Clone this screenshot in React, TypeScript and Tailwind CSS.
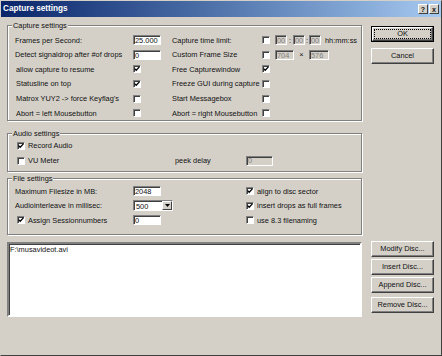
import React from 'react'

type Kids = { children?: React.ReactNode }

function Check({ checked }: { checked?: boolean }) {
  return (
    <span className="inline-flex w-[8px] h-[8px] shrink-0 items-center justify-center bg-white border border-t-[#808080] border-l-[#808080] border-b-white border-r-white shadow-[inset_1px_1px_0_#404040]">
      {checked && (
        <svg width="6" height="6" viewBox="0 0 6 6">
          <path d="M0.6 2.6 L2.2 4.3 L5.4 0.9" stroke="#000" strokeWidth="1.3" fill="none" />
        </svg>
      )}
    </span>
  )
}

function Field({ value, w, disabled }: { value: string; w: string; disabled?: boolean }) {
  return (
    <span
      className={`inline-flex items-center h-[10px] ${w} pl-[1px] pt-[1px] border border-t-[#808080] border-l-[#808080] border-b-white border-r-white shadow-[inset_1px_1px_0_#404040] ${
        disabled ? 'bg-[#d4d0c8] text-[#808080]' : 'bg-white'
      }`}
    >
      {value}
    </span>
  )
}

function Btn({ children, className = '' }: Kids & { className?: string }) {
  return (
    <div className={`flex items-center justify-center h-[16px] w-[63px] bg-[#d4d0c8] border border-t-white border-l-white border-b-[#404040] border-r-[#404040] shadow-[inset_-1px_-1px_0_#808080] ${className}`}>
      {children}
    </div>
  )
}

function Group({ title, className = '', children }: Kids & { title: string; className?: string }) {
  return (
    <div className={`relative w-[355px] border border-[#808080] shadow-[inset_1px_1px_0_#fff,1px_1px_0_#fff] ${className}`}>
      <span className="absolute -top-[5px] left-[4px] px-[1px] bg-[#d4d0c8] leading-[9px]">{title}</span>
      {children}
    </div>
  )
}

function Row({ children, h = 'h-[14.6px]' }: Kids & { h?: string }) {
  return <div className={`flex items-center ${h}`}>{children}</div>
}

export default function App() {
  return (
    <div className="w-[442px] h-[356px] flex flex-col bg-[#d4d0c8] border border-t-[#d4d0c8] border-l-[#d4d0c8] border-b-[#404040] border-r-[#404040] font-['Liberation_Sans',Arial,sans-serif] text-[7.4px] leading-none text-[#111] overflow-hidden">
      {/* title bar */}
      <div className="h-[16px] flex items-center justify-between pl-[2px] pr-[2px] bg-gradient-to-r from-[#0a246a] to-[#a6caf0]">
        <span className="text-white font-bold text-[8.2px]">Capture settings</span>
        <div className="flex gap-[1px]">
          <div className="w-[10px] h-[10px] flex items-center justify-center bg-[#d4d0c8] border border-t-white border-l-white border-b-[#404040] border-r-[#404040] font-bold text-[7px]">?</div>
          <div className="w-[10px] h-[10px] flex items-center justify-center bg-[#d4d0c8] border border-t-white border-l-white border-b-[#404040] border-r-[#404040] font-bold text-[7px]">x</div>
        </div>
      </div>

      <div className="flex pl-[6px] gap-[9px]">
        {/* left column */}
        <div className="flex flex-col mt-[8px]">
          <Group title="Capture settings" className="h-[96px] pt-[7px] pl-[7px]">
            <div className="grid grid-cols-[118px_39px_90px_auto]">
              <Row>Frames per Second:</Row>
              <Row><Field value="25.000" w="w-[28px]" /></Row>
              <Row>Capture time limit:</Row>
              <Row>
                <Check />
                <span className="ml-[5px] flex items-center">
                  <Field value="00" w="w-[12px]" disabled />
                  <span className="w-[6px] text-center">:</span>
                  <Field value="00" w="w-[12px]" disabled />
                  <span className="w-[4px] text-center">:</span>
                  <Field value="00" w="w-[12px]" disabled />
                  <span className="ml-[4px]">hh:mm:ss</span>
                </span>
              </Row>

              <Row>Detect signaldrop after #of drops</Row>
              <Row><Field value="0" w="w-[28px]" /></Row>
              <Row>Custom Frame Size</Row>
              <Row>
                <Check />
                <span className="ml-[5px] flex items-center">
                  <Field value="704" w="w-[19px]" disabled />
                  <span className="w-[15px] text-center">×</span>
                  <Field value="576" w="w-[20px]" disabled />
                </span>
              </Row>

              <Row><span className="pl-[1px]">allow capture to resume</span></Row>
              <Row><Check checked /></Row>
              <Row>Free Capturewindow</Row>
              <Row><Check checked /></Row>

              <Row><span className="pl-[1px]">Statusline on top</span></Row>
              <Row><Check checked /></Row>
              <Row>Freeze GUI during capture</Row>
              <Row><Check /></Row>

              <Row><span className="pl-[1px]">Matrox YUY2 -&gt; force Keyflag's</span></Row>
              <Row><Check /></Row>
              <Row>Start Messagebox</Row>
              <Row><Check /></Row>

              <Row><span className="pl-[1px]">Abort = left Mousebutton</span></Row>
              <Row><Check /></Row>
              <Row>Abort = right Mousebutton</Row>
              <Row><Check /></Row>
            </div>
          </Group>

          <Group title="Audio settings" className="h-[39px] mt-[12px] pt-[4px] pl-[9px]">
            <div className="grid grid-cols-[158px_71px_auto]">
              <Row h="h-[15px]">
                <Check checked />
                <span className="ml-[3px]">Record Audio</span>
              </Row>
              <Row h="h-[15px]" />
              <Row h="h-[15px]" />
              <Row h="h-[15px]">
                <Check />
                <span className="ml-[3px]">VU Meter</span>
              </Row>
              <Row h="h-[15px]">peek delay</Row>
              <Row h="h-[15px]"><Field value="0" w="w-[27px]" disabled /></Row>
            </div>
          </Group>

          <Group title="File settings" className="h-[57px] mt-[6px] pt-[5px] pl-[7px]">
            <div className="grid grid-cols-[118px_113px_auto]">
              <Row h="h-[14.5px]">Maximum Filesize in MB:</Row>
              <Row h="h-[14.5px]"><Field value="2048" w="w-[28px]" /></Row>
              <Row h="h-[14.5px]">
                <Check checked />
                <span className="ml-[3px]">align to disc sector</span>
              </Row>

              <Row h="h-[14.5px]">Audiointerleave in millisec:</Row>
              <Row h="h-[14.5px]">
                <span className="flex items-center h-[11px] w-[40px] bg-white border border-t-[#808080] border-l-[#808080] border-b-white border-r-white shadow-[inset_1px_1px_0_#404040]">
                  <span className="flex-1 pl-[2px] pt-[1px]">500</span>
                  <span className="w-[10px] h-[9px] flex items-center justify-center bg-[#d4d0c8] border border-t-white border-l-white border-b-[#404040] border-r-[#404040]">
                    <svg width="5" height="3" viewBox="0 0 5 3">
                      <path d="M0 0 H5 L2.5 3 Z" fill="#000" />
                    </svg>
                  </span>
                </span>
              </Row>
              <Row h="h-[14.5px]">
                <Check checked />
                <span className="ml-[3px]">insert drops as full frames</span>
              </Row>

              <Row h="h-[14.5px]">
                <span className="ml-[2px] flex items-center">
                  <Check checked />
                  <span className="ml-[3px]">Assign Sessionnumbers</span>
                </span>
              </Row>
              <Row h="h-[14.5px]"><Field value="0" w="w-[28px]" /></Row>
              <Row h="h-[14.5px]">
                <Check />
                <span className="ml-[3px]">use 8.3 filenaming</span>
              </Row>
            </div>
          </Group>

          <div className="mt-[7px] h-[75px] w-[355px] bg-white border-2 border-t-[#808080] border-l-[#808080] border-b-white border-r-white shadow-[inset_1px_1px_0_#404040] pl-[1px] pt-[2px]">
            F:\musavideot.avi
          </div>
        </div>

        {/* right column */}
        <div className="flex flex-col mt-[9px]">
          <div className="h-[16px] w-[63px] border border-black">
            <div className="h-full flex items-center justify-center border border-t-white border-l-white border-b-[#404040] border-r-[#404040] shadow-[inset_-1px_-1px_0_#808080] p-[2px]">
              <span className="w-full h-full flex items-center justify-center outline outline-1 outline-dotted outline-black">OK</span>
            </div>
          </div>
          <Btn className="mt-[6px]">Cancel</Btn>
          <Btn className="mt-[177px]">Modify Disc...</Btn>
          <Btn className="mt-[2px]">Insert Disc...</Btn>
          <Btn className="mt-[2px]">Append Disc...</Btn>
          <Btn className="mt-[4px]">Remove Disc...</Btn>
        </div>
      </div>
    </div>
  )
}
